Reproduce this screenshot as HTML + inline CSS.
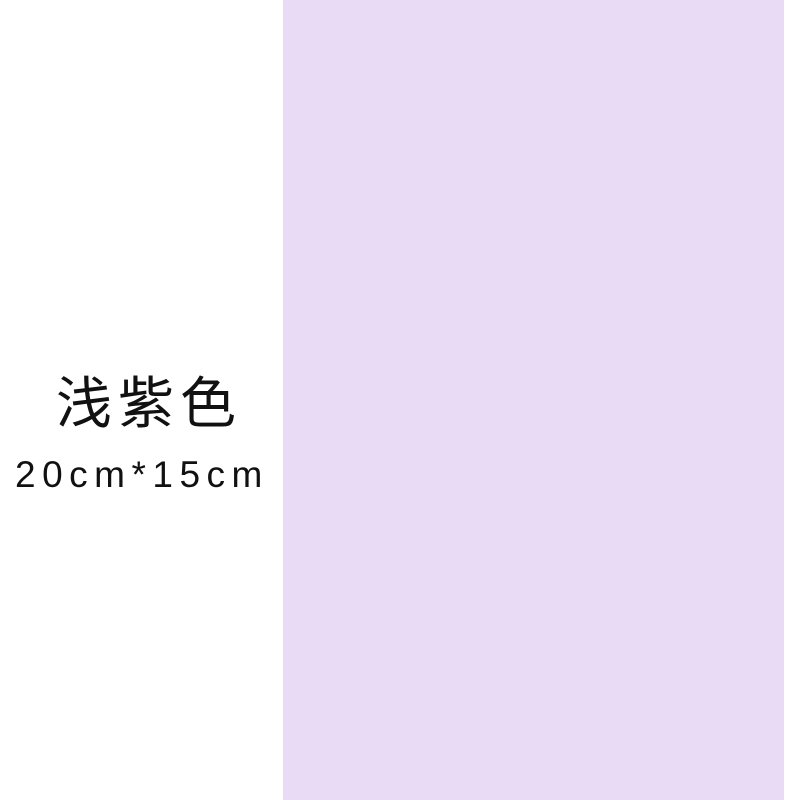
<!DOCTYPE html>
<html><head><meta charset="utf-8"><style>
body{margin:0;width:800px;height:800px;background:#fff;position:relative;overflow:hidden}
.p{position:absolute;left:283px;top:0;width:501px;height:800px;background:#e9dbf6}
.t{position:absolute;left:56px;top:364px;font:56px "Noto Sans CJK SC",sans-serif;letter-spacing:6px;color:#111;line-height:72px;white-space:nowrap}
.s{position:absolute;left:15px;top:450px;font:37px "Liberation Sans",sans-serif;letter-spacing:6.5px;color:#111;line-height:50px;white-space:nowrap}
</style></head><body>
<div class="p"></div>
<div class="t">浅紫色</div>
<div class="s">20cm*15cm</div>
</body></html>
